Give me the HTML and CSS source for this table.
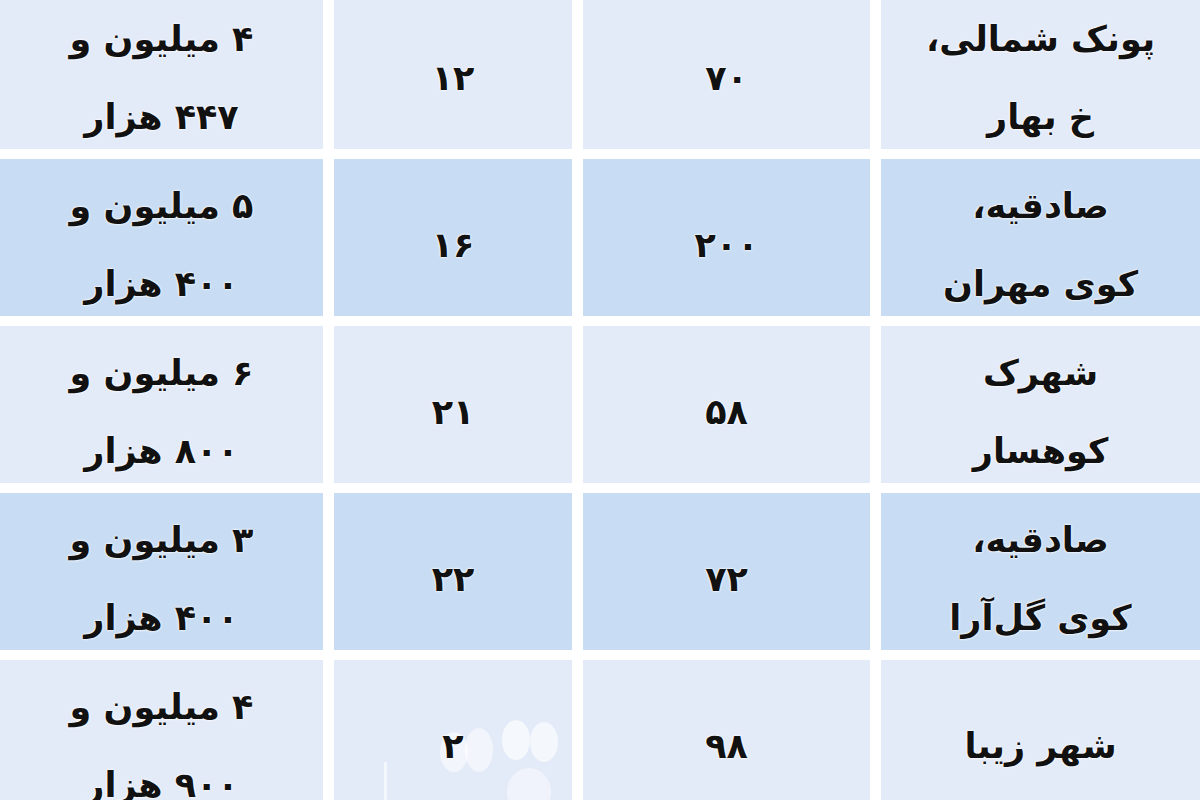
FILE: index.html
```html
<!DOCTYPE html>
<html lang="fa" dir="rtl">
<head>
<meta charset="utf-8">
<title>جدول</title>
<link rel="stylesheet" href="styles.css">
</head>
<body>
<div class="table">
  <div class="cell light">پونک شمالی،<br>خ بهار</div>
  <div class="cell light">۷۰</div>
  <div class="cell light">۱۲</div>
  <div class="cell light">۴ میلیون و<br>۴۴۷ هزار</div>

  <div class="cell dark">صادقیه،<br>کوی مهران</div>
  <div class="cell dark">۲۰۰</div>
  <div class="cell dark">۱۶</div>
  <div class="cell dark">۵ میلیون و<br>۴۰۰ هزار</div>

  <div class="cell light">شهرک<br>کوهسار</div>
  <div class="cell light">۵۸</div>
  <div class="cell light">۲۱</div>
  <div class="cell light">۶ میلیون و<br>۸۰۰ هزار</div>

  <div class="cell dark">صادقیه،<br>کوی گل‌آرا</div>
  <div class="cell dark">۷۲</div>
  <div class="cell dark">۲۲</div>
  <div class="cell dark">۳ میلیون و<br>۴۰۰ هزار</div>

  <div class="cell light">شهر زیبا</div>
  <div class="cell light">۹۸</div>
  <div class="cell light deco-cell">
    <svg class="deco" width="200" height="110" viewBox="0 0 200 110" aria-hidden="true">
      <ellipse cx="20" cy="30" rx="14" ry="20" fill="#fff" opacity="0.55"/>
      <ellipse cx="45" cy="28" rx="14" ry="22" fill="#fff" opacity="0.55"/>
      <ellipse cx="82" cy="18" rx="14" ry="20" fill="#fff" opacity="0.65"/>
      <ellipse cx="110" cy="20" rx="14" ry="20" fill="#fff" opacity="0.6"/>
      <ellipse cx="95" cy="70" rx="22" ry="24" fill="#fff" opacity="0.45"/>
      <rect x="-50" y="40" width="3" height="60" fill="#fff" opacity="0.6"/>
    </svg>
    <span class="over">۲</span>
  </div>
  <div class="cell light">۴ میلیون و<br>۹۰۰ هزار</div>
</div>
</body>
</html>
```

FILE: styles.css
```css
html, body {
  margin: 0;
  padding: 0;
  background: #ffffff;
  width: 1200px;
  height: 800px;
  overflow: hidden;
}

.table {
  display: grid;
  direction: rtl;
  grid-template-columns: 319px 287px 238px 323px;
  grid-auto-rows: 157px;
  column-gap: 11px;
  row-gap: 10px;
  margin-top: -8px;
  font-family: "DejaVu Sans", sans-serif;
  font-weight: bold;
  color: #111;
}

.cell {
  display: flex;
  align-items: center;
  justify-content: center;
  text-align: center;
  box-sizing: border-box;
  padding-top: 14px;
  font-size: 35px;
  line-height: 78px;
  text-shadow: 0 0 3px #fff, 0 0 2px #fff;
}

.light {
  background: #e3eaf8;
}

.dark {
  background: #c8dcf3;
}

.deco-cell {
  position: relative;
  overflow: hidden;
}

.deco {
  position: absolute;
  left: 100px;
  top: 62px;
  overflow: visible;
}

.over {
  position: relative;
  z-index: 1;
}
```
